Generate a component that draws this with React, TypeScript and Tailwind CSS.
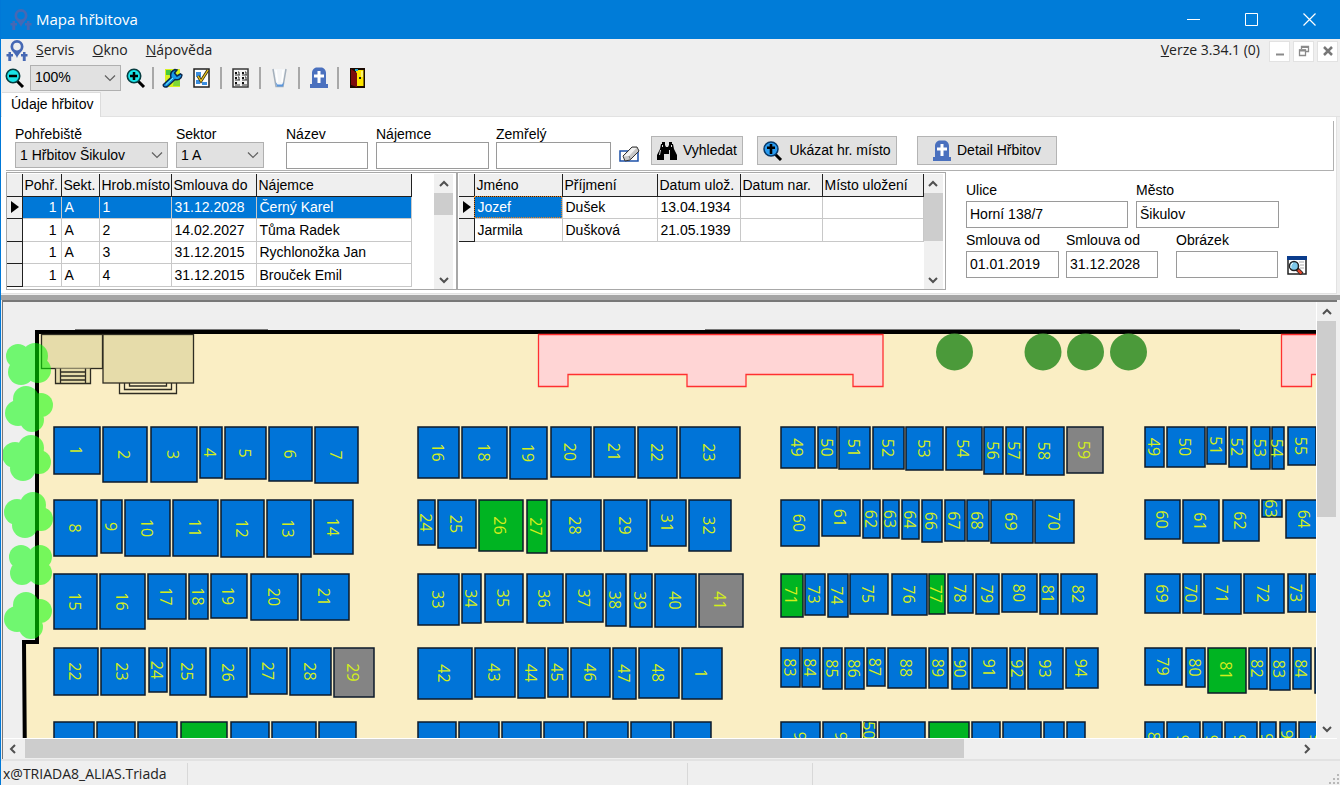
import { type ReactNode } from "react";

type Plot = [label: string, x: number, width: number, height: number, state?: "free" | "closed"];

const fills = { used: "#0074d8", free: "#00b422", closed: "#848484" };

// One entry per row of graves, y is the top edge of the whole row
const rows: { y: number; plots: Plot[] }[] = [
  {
    y: 427,
    plots: [
      ["1", 54, 46, 47], ["2", 103, 44, 55], ["3", 151, 46, 55], ["4", 200, 22, 51],
      ["5", 225, 41, 52], ["6", 269, 43, 54], ["7", 315, 43, 56],
      ["16", 418, 41, 51], ["18", 462, 45, 51], ["19", 510, 37, 52], ["20", 551, 40, 50],
      ["21", 594, 41, 50], ["22", 638, 39, 51], ["23", 680, 60, 51],
      ["49", 781, 34, 41], ["50", 818, 19, 41], ["51", 839, 31, 42], ["52", 873, 31, 42],
      ["53", 906, 37, 43], ["54", 946, 36, 43], ["56", 984, 19, 47], ["57", 1006, 17, 47],
      ["58", 1026, 38, 48], ["59", 1067, 36, 46, "closed"],
      ["49", 1145, 19, 40], ["50", 1167, 38, 40], ["51", 1207, 19, 37], ["52", 1229, 18, 40],
      ["53", 1251, 19, 42], ["54", 1272, 12, 42], ["55", 1288, 28, 38],
    ],
  },
  {
    y: 500,
    plots: [
      ["8", 54, 43, 56], ["9", 101, 21, 53], ["10", 125, 45, 56], ["11", 173, 45, 56],
      ["12", 221, 43, 57], ["13", 267, 44, 57], ["14", 314, 39, 54],
      ["24", 418, 17, 45], ["25", 438, 38, 48], ["26", 479, 44, 51, "free"], ["27", 527, 20, 53, "free"],
      ["28", 551, 50, 51], ["29", 604, 43, 51], ["31", 650, 36, 46], ["32", 689, 42, 51],
      ["60", 781, 38, 46], ["61", 822, 38, 36], ["62", 863, 17, 38], ["63", 883, 16, 38],
      ["64", 902, 17, 39], ["66", 922, 20, 42], ["67", 945, 20, 41], ["68", 967, 22, 41],
      ["69", 991, 42, 43], ["70", 1035, 39, 43],
      ["60", 1145, 35, 39], ["61", 1183, 36, 43], ["62", 1223, 36, 41], ["63", 1262, 20, 17],
      ["64", 1286, 38, 38],
    ],
  },
  {
    y: 574,
    plots: [
      ["15", 54, 43, 55], ["16", 100, 45, 55], ["17", 148, 38, 45], ["18", 189, 19, 45],
      ["19", 211, 36, 44], ["20", 251, 47, 46], ["21", 301, 48, 46],
      ["33", 418, 41, 51], ["34", 462, 19, 49], ["35", 485, 38, 48], ["36", 527, 36, 49],
      ["37", 566, 37, 48], ["38", 606, 20, 52], ["39", 630, 22, 53], ["40", 655, 41, 53],
      ["41", 699, 44, 53, "closed"],
      ["71", 781, 22, 43, "free"], ["73", 805, 20, 41], ["74", 828, 20, 43], ["75", 850, 38, 40],
      ["76", 892, 35, 41], ["77", 929, 16, 40, "free"], ["78", 948, 25, 39], ["79", 976, 23, 40],
      ["80", 1002, 35, 38], ["81", 1040, 18, 40], ["82", 1061, 36, 40],
      ["69", 1145, 35, 39], ["70", 1183, 18, 39], ["71", 1204, 37, 40], ["72", 1244, 40, 39],
      ["73", 1288, 18, 38], ["", 1309, 24, 38],
    ],
  },
  {
    y: 648,
    plots: [
      ["22", 54, 44, 47], ["23", 101, 44, 47], ["24", 149, 18, 44], ["25", 170, 36, 47],
      ["26", 210, 37, 49], ["27", 250, 37, 46], ["28", 290, 41, 47], ["29", 334, 40, 49, "closed"],
      ["42", 418, 54, 51], ["43", 475, 40, 49], ["44", 518, 27, 50], ["45", 548, 20, 49],
      ["46", 571, 39, 49], ["47", 613, 23, 51], ["48", 639, 40, 50], ["1", 682, 40, 51],
      ["83", 781, 19, 39], ["84", 802, 18, 39], ["85", 823, 19, 41], ["86", 845, 19, 41],
      ["87", 867, 18, 38], ["88", 888, 38, 40], ["89", 929, 19, 40], ["90", 952, 17, 41],
      ["91", 972, 35, 40], ["92", 1010, 15, 41], ["93", 1028, 35, 41], ["94", 1066, 32, 40],
      ["79", 1145, 37, 37], ["80", 1186, 19, 39], ["81", 1208, 38, 45, "free"], ["82", 1249, 18, 41],
      ["83", 1270, 20, 42], ["84", 1293, 18, 41], ["", 1315, 20, 45],
    ],
  },
  {
    y: 722,
    plots: [
      ["", 54, 40, 50], ["", 97, 38, 48], ["", 138, 39, 49], ["", 181, 46, 48, "free"],
      ["", 231, 38, 49], ["", 272, 44, 52], ["", 319, 37, 52],
      ["", 418, 38, 50], ["", 459, 40, 50], ["", 502, 39, 50], ["", 544, 40, 50],
      ["", 587, 41, 50], ["", 631, 40, 50], ["", 674, 37, 50],
      ["95", 781, 39, 38], ["96", 823, 38, 38], ["50", 864, 12, 17], ["", 879, 46, 52],
      ["", 929, 40, 52, "free"], ["", 972, 28, 52], ["", 1003, 38, 38], ["", 1044, 20, 50],
      ["", 1067, 18, 50],
      ["89", 1145, 19, 38], ["90", 1167, 33, 44], ["91", 1203, 19, 44], ["92", 1225, 32, 43],
      ["93", 1260, 16, 41], ["94", 1280, 16, 34], ["95", 1299, 36, 42],
    ],
  },
];

// Each bush is a cluster of overlapping circles: cx, cy, r
const bushes = [
  [[18, 356, 12], [35, 356, 13], [21, 372, 13], [38, 370, 13], [28, 364, 10]],
  [[26, 399, 13], [41, 405, 12], [18, 413, 13], [32, 420, 12], [31, 409, 12]],
  [[31, 448, 13], [15, 455, 13], [39, 462, 12], [23, 468, 13], [28, 458, 12]],
  [[33, 505, 13], [17, 512, 13], [41, 519, 12], [25, 525, 13], [30, 514, 12]],
  [[21, 557, 12], [40, 557, 12], [22, 573, 12], [40, 573, 12], [30, 565, 14]],
  [[26, 605, 13], [40, 611, 12], [17, 619, 13], [31, 627, 12], [28, 616, 12]],
];

function CemeteryMap() {
  return (
    <svg
      className="absolute left-0 top-0"
      width="1513"
      height="598"
      viewBox="3 302 1513 598"
      role="img"
      aria-label="Mapa hřbitova"
    >
      <path d="M38 332H1516V900H25L24 642H38Z" fill="#faeec4" />
      <path d="M1516 332H37V642H24L26 900" fill="none" stroke="#000" strokeWidth="4" />
      <path d="M75 329.500H268M705 329.500H1240" stroke="#777" strokeWidth="1" />

      <g stroke="#2e2c22" strokeWidth="1.300" fill="#e6dcaa">
        <rect x="41.500" y="334.500" width="61" height="34" />
        <rect x="103" y="334.500" width="90.500" height="48.500" />
        <path d="M55.500 368.500V383.500H90.500V368.500M60.500 368.500V383.500M85.500 368.500V383.500M60.500 372H85.500M60.500 376H85.500M60.500 380H85.500" />
        <path d="M119.500 383V393.500H176.500V383M124.500 383V389.500H171.500V383M129.500 383V386H166.500V383" fill="none" />
      </g>

      <g fill="#ffd5d5" stroke="#ff3030" strokeWidth="1.300">
        <path d="M538.500 334.500H883V386.500H853V374.500H746V386.500H687V374.500H568V386.500H538.500Z" />
        <path d="M1281.500 334.500H1516V374.500H1311.500V386.500H1281.500Z" />
      </g>

      <g fill="#4b9a3a">
        <circle cx="954.500" cy="352" r="18.500" />
        <circle cx="1043" cy="352" r="18.500" />
        <circle cx="1085.500" cy="352" r="18.500" />
        <circle cx="1128.500" cy="352" r="18.500" />
      </g>

      {bushes.map((circles, i) => (
        <g key={i} fill="#00ff00" opacity="0.53">
          {circles.map(([cx, cy, r]) => (
            <circle key={`${cx}-${cy}`} cx={cx} cy={cy} r={r} />
          ))}
        </g>
      ))}

      {rows.map((row) =>
        row.plots.map(([label, x, width, height, state]) => {
          const cx = x + width / 2 - 1;
          const cy = row.y + height / 2;
          return (
            <g key={`${row.y}-${x}`}>
              <rect
                x={x}
                y={row.y}
                width={width}
                height={height}
                fill={fills[state ?? "used"]}
                stroke="#0c1a2a"
                strokeWidth="1.500"
              />
              {label && (
                <text
                  x={cx}
                  y={cy}
                  transform={`rotate(90 ${cx} ${cy})`}
                  textAnchor="middle"
                  dy="6"
                  fill="#d3ee1c"
                  className="font-['Open_Sans',sans-serif] text-[16px]"
                >
                  {label}
                </text>
              )}
            </g>
          );
        })
      )}
    </svg>
  );
}

/* Icons */

function PinIcon() {
  return (
    <svg width="22" height="22" viewBox="0 0 22 22" className="shrink-0">
      <path
        fillRule="evenodd"
        fill="#4668b4"
        d="M11 0a6.500 6.500 0 0 0-6.500 6.500c0 2.500 1.500 4.500 3 6 1.500 1.500 2.500 3 3.500 5.500 1-2.500 2-4 3.500-5.500 1.500-1.500 3-3.500 3-6A6.500 6.500 0 0 0 11 0Zm0 2.800a3.800 3.800 0 1 1 0 7.600A3.800 3.800 0 0 1 11 2.800Z"
      />
      <path
        fill="#4668b4"
        d="M2.500 12h2.500v2h2v2.500H5.200V21H2.300v-4.500H.5V14h2ZM17 12h2.500v2h2v2.500h-1.800V21h-2.900v-4.500H15V14h2Z"
      />
    </svg>
  );
}

function ZoomIcon({ plus = false }: { plus?: boolean }) {
  return (
    <svg width="20" height="20" viewBox="0 0 20 20" className="shrink-0">
      <path d="M12 13l6 6" stroke="#000" strokeWidth="3" />
      <circle cx="8" cy="8" r="6.700" fill="#19e3e8" stroke="#063c40" strokeWidth="1.600" />
      <path d="M4 8h8" stroke="#000" strokeWidth="2.500" />
      {plus && <path d="M8 4v8" stroke="#000" strokeWidth="2.500" />}
    </svg>
  );
}

function WrenchIcon() {
  return (
    <svg width="21" height="20" viewBox="0 0 21 20">
      <path d="M3 1h15v18H3z" fill="#d8f020" />
      <path d="M12 11h6v7h-7z" fill="#7ed838" />
      <path d="M4 2h5v5H4z" fill="#46c83c" />
      <path
        d="M1.500 16.500 9 9.500C8 6 9.500 3 13 1.500l2 .5-2.500 3 2.500 3 3.500-2 1.500 1c-.5 4-4 5.500-7 4.500l-7.500 7c-2.500 1.500-5-.500-4-2Z"
        fill="#189ae8"
        stroke="#0a2850"
        strokeWidth="1.500"
      />
      <path d="M4 16.500l7-6.500" stroke="#7ff4ff" strokeWidth="1" />
    </svg>
  );
}

function NoteIcon() {
  return (
    <svg width="19" height="20" viewBox="0 0 19 20">
      <path d="M2 1h15v18H2z" fill="#fff" stroke="#222" strokeWidth="1.500" />
      <path d="M4 4h5v5H4zM4 12h4v4H4zM10 14h5v3h-5z" fill="#3a8ee0" />
      <path d="M6 8l3 5 7-11" fill="none" stroke="#3a3410" strokeWidth="3" />
      <path d="M6 8l3 5 7-11" fill="none" stroke="#f0c820" strokeWidth="1.300" />
    </svg>
  );
}

function ListIcon() {
  return (
    <svg width="19" height="20" viewBox="0 0 19 20">
      <path d="M2 1h15v18H2z" fill="#f4f4f4" stroke="#3a3a3a" strokeWidth="1.500" />
      <path d="M4 4h2v2H4zM4 9h2v2H4zM4 14h2v2H4zM11 4h2v2h-2zM11 9h2v2h-2zM11 14h2v2h-2z" fill="#111" />
      <path d="M4 7h5M7 4h1v3M11 7h5M14 4h1v3M4 12h5M7 9h1v3M11 12h5M14 9h1v3M4 17h5M11 17h5" stroke="#333" fill="none" />
    </svg>
  );
}

function GlassIcon() {
  return (
    <svg width="17" height="20" viewBox="0 0 17 20">
      <path d="M2 1h13l-2 17.500H5z" fill="#f4f6f8" />
      <path d="M2 1l3 17.500h7L15 1" fill="none" stroke="#a4b0bc" strokeWidth="1.500" />
      <path d="M5 2l1.500 12M12 2l-1 12" stroke="#fff" strokeWidth="1.500" />
      <path d="M4.500 14l1.500 4.500h6l1-4.500-2 2.500H6.500z" fill="#5a96dc" />
    </svg>
  );
}

function TombIcon() {
  return (
    <svg width="18" height="21" viewBox="0 0 18 21">
      <path d="M2 17V6c0-3 2-5.500 5-5.500h4c3 0 5 2.500 5 5.500v11h2v4H0v-4Z" fill="#4a70be" />
      <path d="M7.500 4h3v3.500H14v3h-3.500V16h-3v-5.500H4v-3h3.500Z" fill="#fff" />
    </svg>
  );
}

function DoorIcon() {
  return (
    <svg width="15" height="20" viewBox="0 0 15 20">
      <path d="M0 0h15v20H0z" fill="#1a0a00" />
      <path d="M6 2h7.500v16H6z" fill="#ffe600" />
      <path d="M1 1l6 4v14l-6-2z" fill="#7c0c0c" />
      <path d="M11 3h2v6h-2z" fill="#fff470" />
      <path d="M5 1h3v2H5z" fill="#20a8d0" />
      <path d="M9 9h2v2H9z" fill="#222" />
    </svg>
  );
}

function EraserIcon() {
  return (
    <svg width="21" height="18" viewBox="0 0 21 18">
      <path d="M1 6h18v10H1z" fill="#fff" stroke="#1c50a8" strokeWidth="1.500" />
      <path d="M4 11 13 2h5l2 4-9 9-5 1z" fill="#c8c8c8" stroke="#333" strokeWidth="1" />
      <path d="M4.500 11.500 13 3h4.500L10 11z" fill="#f2f2f2" />
      <path d="M10 11l1.500 3.500" fill="none" stroke="#777" />
    </svg>
  );
}

function BinocularsIcon() {
  return (
    <svg width="20" height="18" viewBox="0 0 20 18">
      <path d="M4 2h1V0h3v3l1 2h2l1-2V0h3v2h1l1 5 3 6v5h-7v-6H7v6H0v-5l3-6z" fill="#000" />
      <path d="M3.500 8l-1 5M12.500 8v5M5.500 3v2M14.500 3v2" stroke="#ddd" strokeWidth="1" />
    </svg>
  );
}

function FindPlaceIcon() {
  return (
    <svg width="20" height="20" viewBox="0 0 20 20">
      <path d="M12 13l6 6" stroke="#000" strokeWidth="3" />
      <circle cx="8" cy="8" r="7" fill="#2a9cf0" stroke="#083868" strokeWidth="1.500" />
      <path d="M6.700 3h2.600v2.500H12v2.600H9.300V13H6.700V8.100H4V5.500h2.700Z" fill="#000" />
    </svg>
  );
}

function PictureIcon() {
  return (
    <svg width="20" height="19" viewBox="0 0 20 19">
      <path d="M1 1h18v17H1z" fill="#fff" stroke="#222" strokeWidth="1.500" />
      <path d="M0 0h20v4H0z" fill="#0a3c8c" />
      <path d="M12 6h5M13 9h4M13 12h4" stroke="#aaa" />
      <circle cx="7" cy="10" r="4.500" fill="#7ec8e8" stroke="#222" strokeWidth="1.500" />
      <path d="M6 7c-2 1-2.500 3-2 5" stroke="#fff" fill="none" />
      <path d="M10 13l5 5" stroke="#222" strokeWidth="4" />
      <path d="M11 14l3.500 3.500" stroke="#e0452a" strokeWidth="2.500" />
    </svg>
  );
}

const arrowPaths = {
  up: "M2 8l4-4 4 4",
  down: "M2 4l4 4 4-4",
  left: "M8 2L4 6l4 4",
  right: "M4 2l4 4-4 4",
};

function ScrollArrow({ dir, label }: { dir: keyof typeof arrowPaths; label: string }) {
  return (
    <button aria-label={label} className="flex size-[19px] shrink-0 items-center justify-center">
      <svg width="12" height="12" viewBox="0 0 12 12">
        <path d={arrowPaths[dir]} fill="none" stroke="#505050" strokeWidth="2" />
      </svg>
    </button>
  );
}

/* Form parts */

function Select({ id, value, className }: { id: string; value: string; className: string }) {
  return (
    <div className={`relative ${className}`}>
      <select
        id={id}
        aria-label={value}
        className="h-[26px] w-full appearance-none border border-[#b0b0b0] bg-[#e1e1e1] pl-1 pr-5 outline-none"
      >
        <option>{value}</option>
      </select>
      <svg width="12" height="12" viewBox="0 0 12 12" className="pointer-events-none absolute right-[5px] top-[7px]">
        <path d="M1 3.500l5 5 5-5" fill="none" stroke="#606060" strokeWidth="1.200" />
      </svg>
    </div>
  );
}

function Field({ id, label, className, children }: { id: string; label: string; className?: string; children: ReactNode }) {
  return (
    <div className={`flex flex-col ${className ?? ""}`}>
      <label htmlFor={id} className="h-4 whitespace-nowrap leading-4">
        {label}
      </label>
      {children}
    </div>
  );
}

function TextField({ id, label, value = "", className, detail = false }: {
  id: string;
  label: string;
  value?: string;
  className?: string;
  detail?: boolean;
}) {
  return (
    <Field id={id} label={label} className={className}>
      <input
        id={id}
        defaultValue={value}
        className={
          detail
            ? "mt-[3px] h-[27px] w-full border border-[#9a9a9a] bg-white px-[3px] pb-[2px] outline-none"
            : "h-[27px] w-full border border-[#9a9a9a] bg-white px-[3px] outline-none"
        }
      />
    </Field>
  );
}

function ActionButton({ icon, className, children }: { icon: ReactNode; className: string; children: ReactNode }) {
  return (
    <button
      className={`flex h-[29px] items-center justify-center gap-[6px] whitespace-nowrap border border-[#b4b4b4] bg-[#e1e1e1] ${className}`}
    >
      {icon}
      {children}
    </button>
  );
}

function ToolButton({ label, className, children }: { label: string; className?: string; children: ReactNode }) {
  return (
    <button aria-label={label} className={`flex items-center justify-center ${className ?? "w-[37px]"}`}>
      {children}
    </button>
  );
}

function Separator() {
  return <div className="h-[22px] w-[2px] shrink-0 bg-[#a8a8a8]" />;
}

/* Data grids */

type Column = { title: string; width: number; right?: boolean };

const graveColumns: Column[] = [
  { title: "Pohř.", width: 39, right: true },
  { title: "Sekt.", width: 38 },
  { title: "Hrob.místo", width: 72 },
  { title: "Smlouva do", width: 85 },
  { title: "Nájemce", width: 155 },
];

const graves = [
  ["1", "A", "1", "31.12.2028", "Černý Karel"],
  ["1", "A", "2", "14.02.2027", "Tůma Radek"],
  ["1", "A", "3", "31.12.2015", "Rychlonožka Jan"],
  ["1", "A", "4", "31.12.2015", "Brouček Emil"],
];

const personColumns: Column[] = [
  { title: "Jméno", width: 88 },
  { title: "Příjmení", width: 95 },
  { title: "Datum ulož.", width: 83 },
  { title: "Datum nar.", width: 82 },
  { title: "Místo uložení", width: 101 },
];

const persons = [
  ["Jozef", "Dušek", "13.04.1934", "", ""],
  ["Jarmila", "Dušková", "21.05.1939", "", ""],
];

function Grid({ columns, data, selectRow = false }: { columns: Column[]; data: string[][]; selectRow?: boolean }) {
  const total = columns.reduce((sum, c) => sum + c.width, 15);
  return (
    <table className="table-fixed border-collapse self-start" style={{ width: total }}>
      <colgroup>
        <col className="w-[15px]" />
        {columns.map((c) => (
          <col key={c.title} style={{ width: c.width }} />
        ))}
      </colgroup>
      <thead>
        <tr className="h-[22px] bg-[#efefef]">
          <th className="border-b border-r border-[#202020] p-0" />
          {columns.map((c) => (
            <th
              key={c.title}
              className="whitespace-nowrap border-b border-r border-[#202020] py-0 pl-[2px] pr-0 text-left font-normal leading-4"
            >
              {c.title}
            </th>
          ))}
        </tr>
      </thead>
      <tbody>
        {data.map((row, r) => (
          <tr key={r} className="odd:h-[22px] even:h-[23px]">
            <td className="border-b border-r border-[#202020] bg-[#efefef] p-0">
              {r === 0 && (
                <svg width="8" height="12" viewBox="0 0 8 12" className="ml-1">
                  <path d="M0 0l8 6-8 6z" />
                </svg>
              )}
            </td>
            {row.map((cell, c) => {
              const selected = r === 0 && (selectRow || c === 0);
              return (
                <td
                  key={c}
                  className={`whitespace-nowrap border-b border-r border-[#c8c8c8] py-0 pl-[3px] pr-1 leading-4 ${
                    columns[c].right ? "text-right" : ""
                  } ${selected ? "bg-[#0078d7] text-white" : ""} ${
                    selected && !selectRow ? "outline-1 -outline-offset-1 outline-dotted outline-[#e08020]" : ""
                  }`}
                >
                  {cell}
                </td>
              );
            })}
          </tr>
        ))}
      </tbody>
    </table>
  );
}

function GridScroll({ thumb }: { thumb: string }) {
  return (
    <div className="ml-auto flex w-[19px] flex-col bg-[#f0f0f0]">
      <ScrollArrow dir="up" label="Nahoru" />
      <div className={`w-full bg-[#cdcdcd] ${thumb}`} />
      <div className="flex-1" />
      <ScrollArrow dir="down" label="Dolů" />
    </div>
  );
}

export default function App() {
  return (
    <div className="flex h-screen min-h-[600px] flex-col overflow-hidden border-l border-[#0078d7] bg-[#efefef] font-['Liberation_Sans',Arial,sans-serif] text-[14px] text-black">
      {/* Title bar */}
      <header className="flex h-[39px] shrink-0 items-center bg-[#007cd8] pl-[9px] pr-[2px] text-white">
        <PinIcon />
        <h1 className="ml-1 font-['Open_Sans',sans-serif] text-[15px]">Mapa hřbitova</h1>
        <div className="ml-auto flex h-full">
          <button aria-label="Minimalizovat" className="flex w-[58px] items-center justify-center">
            <svg width="13" height="13"><path d="M0 6.500h13" stroke="#fff" /></svg>
          </button>
          <button aria-label="Maximalizovat" className="flex w-[58px] items-center justify-center">
            <svg width="13" height="13"><path d="M.5.5h12v12H.5z" fill="none" stroke="#fff" /></svg>
          </button>
          <button aria-label="Zavřít" className="flex w-[58px] items-center justify-center">
            <svg width="13" height="13"><path d="M.5.5l12 12M12.500.5l-12 12" stroke="#fff" strokeWidth="1.200" /></svg>
          </button>
        </div>
      </header>

      {/* Menu */}
      <nav className="flex h-6 shrink-0 items-center pl-[5px] pr-[2px] font-['Open_Sans',sans-serif] text-[#222]">
        <PinIcon />
        <div className="ml-2 flex gap-[18px] pb-[3px]">
          <button><u>S</u>ervis</button>
          <button><u>O</u>kno</button>
          <button><u>N</u>ápověda</button>
        </div>
        <span className="ml-auto pb-[3px]"><u>V</u>erze 3.34.1 (0)</span>
        <div className="ml-[9px] flex gap-[3px]">
          <button aria-label="Minimalizovat okno" className="flex size-[21px] items-center justify-center border border-[#e2e2e2] bg-white">
            <svg width="12" height="12"><path d="M2 9.500h8" stroke="#8a8a8a" strokeWidth="2" /></svg>
          </button>
          <button aria-label="Obnovit okno" className="flex size-[21px] items-center justify-center border border-[#e2e2e2] bg-white">
            <svg width="12" height="12">
              <path d="M3.500 4V1.500h7v5H8M1.500 5h6v5.500h-6z" fill="none" stroke="#8a8a8a" strokeWidth="1.300" />
              <path d="M3 2h8M1 5.500h7" stroke="#8a8a8a" strokeWidth="2" />
            </svg>
          </button>
          <button aria-label="Zavřít okno" className="flex size-[21px] items-center justify-center border border-[#e2e2e2] bg-white">
            <svg width="12" height="12"><path d="M2 2l8 8M10 2l-8 8" stroke="#777" strokeWidth="2.500" /></svg>
          </button>
        </div>
      </nav>

      {/* Toolbar */}
      <div className="flex h-[29px] shrink-0 items-center pl-1">
        <ToolButton label="Zmenšit" className="mr-[5px] w-5"><ZoomIcon /></ToolButton>
        <Select id="zoom" value="100%" className="w-[91px]" />
        <ToolButton label="Zvětšit" className="ml-[5px] mr-[6px] w-5"><ZoomIcon plus /></ToolButton>
        <Separator />
        <ToolButton label="Nastavení mapy"><WrenchIcon /></ToolButton>
        <ToolButton label="Upravit" className="mr-[9px] w-5"><NoteIcon /></ToolButton>
        <Separator />
        <ToolButton label="Seznam"><ListIcon /></ToolButton>
        <Separator />
        <ToolButton label="Vyprázdnit"><GlassIcon /></ToolButton>
        <Separator />
        <ToolButton label="Hroby"><TombIcon /></ToolButton>
        <Separator />
        <ToolButton label="Konec"><DoorIcon /></ToolButton>
      </div>

      {/* Tabs */}
      <div className="flex h-[25px] shrink-0 border-b border-[#e2e2e2] pl-px" role="tablist">
        <button role="tab" aria-selected="true" className="-mb-px border-r border-t border-[#dcdcdc] bg-white pb-[2px] pl-[9px] pr-[6px]">
          Údaje hřbitov
        </button>
      </div>

      {/* Data panel */}
      <section className="mr-[3px] flex h-[177px] shrink-0 flex-col border-b border-r border-[#e2e2e2] bg-white pl-[5px]">
        <div className="mr-[2px] mt-1 flex h-[50px] shrink-0 items-start border-b border-r border-[#b0b0b0] pl-[9px] pt-[5px]">
          <Field id="cemetery" label="Pohřebiště" className="w-[153px]">
            <Select id="cemetery" value="1 Hřbitov Šikulov" className="w-full" />
          </Field>
          <Field id="sector" label="Sektor" className="ml-2 w-[88px]">
            <Select id="sector" value="1 A" className="w-full" />
          </Field>
          <TextField id="name" label="Název" className="ml-[22px] w-[82px]" />
          <TextField id="tenant" label="Nájemce" className="ml-2 w-[113px]" />
          <TextField id="deceased" label="Zemřelý" className="ml-[7px] w-[115px]" />
          <button aria-label="Vymazat filtr" className="ml-2 mt-[19px]"><EraserIcon /></button>
          <div className="ml-[11px] mt-[10px] flex">
            <ActionButton icon={<BinocularsIcon />} className="w-[92px]">Vyhledat</ActionButton>
            <ActionButton icon={<FindPlaceIcon />} className="ml-[14px] w-[140px]">Ukázat hr. místo</ActionButton>
            <ActionButton icon={<TombIcon />} className="ml-5 w-[140px]">Detail Hřbitov</ActionButton>
          </div>
        </div>

        <div className="flex min-h-0 flex-1 pb-[3px] pt-px">
          <div className="flex w-[451px] overflow-hidden border border-[#a8a8a8] pr-[3px] pt-px">
            <Grid columns={graveColumns} data={graves} selectRow />
            <GridScroll thumb="h-[22px]" />
          </div>
          <div className="flex w-[489px] overflow-hidden border border-[#a8a8a8] pl-px pr-[3px] pt-px">
            <Grid columns={personColumns} data={persons} />
            <GridScroll thumb="h-[48px]" />
          </div>
          <div className="flex flex-col gap-1 pl-5 pt-[10px]">
            <div className="flex gap-2">
              <TextField detail id="street" label="Ulice" value="Horní 138/7" className="w-[162px]" />
              <TextField detail id="city" label="Město" value="Šikulov" className="w-[143px]" />
            </div>
            <div className="flex">
              <TextField detail id="from" label="Smlouva od" value="01.01.2019" className="w-[93px]" />
              <TextField detail id="to" label="Smlouva od" value="31.12.2028" className="ml-[7px] w-[92px]" />
              <TextField detail id="picture" label="Obrázek" className="ml-[18px] w-[102px]" />
              <button aria-label="Zobrazit obrázek" className="ml-[9px] mt-5"><PictureIcon /></button>
            </div>
          </div>
        </div>
      </section>

      <div className="mt-px h-[5px] shrink-0 bg-[#a4a4a4]" />

      {/* Map */}
      <main className="ml-px mr-[3px] flex min-h-0 flex-1 flex-col border-l border-t-2 border-[#787878]">
        <div className="flex min-h-0 flex-1">
          <div className="relative flex-1 overflow-hidden">
            <CemeteryMap />
          </div>
          <div className="flex w-[21px] flex-col border-l border-white">
            <ScrollArrow dir="up" label="Posunout nahoru" />
            <div className="h-[196px] w-[19px] shrink-0 bg-[#cdcdcd]" />
            <div className="flex-1" />
            <ScrollArrow dir="down" label="Posunout dolů" />
          </div>
        </div>
        <div className="flex h-[21px] shrink-0 border-t border-white pr-[21px]">
          <ScrollArrow dir="left" label="Posunout doleva" />
          <div className="ml-[3px] h-[19px] w-[939px] bg-[#cdcdcd]" />
          <div className="flex-1" />
          <ScrollArrow dir="right" label="Posunout doprava" />
        </div>
      </main>

      {/* Status bar */}
      <footer className="flex h-[26px] shrink-0 items-stretch border-t-2 border-[#e2e2e2] pl-[2px] pt-[2px] font-['Open_Sans',sans-serif] text-[#222]">
        <div className="w-[185px] border-r border-[#d8d8d8] leading-[22px]">x@TRIADA8_ALIAS.Triada</div>
        <div className="w-[500px] border-r border-[#d8d8d8]" />
        <div className="w-[125px] border-r border-[#d8d8d8]" />
        <svg width="12" height="12" className="ml-auto self-end">
          <path d="M9 1h2v2H9zM5 5h2v2H5zM9 5h2v2H9zM1 9h2v2H1zM5 9h2v2H5zM9 9h2v2H9z" fill="#b8b8b8" />
        </svg>
      </footer>
    </div>
  );
}
